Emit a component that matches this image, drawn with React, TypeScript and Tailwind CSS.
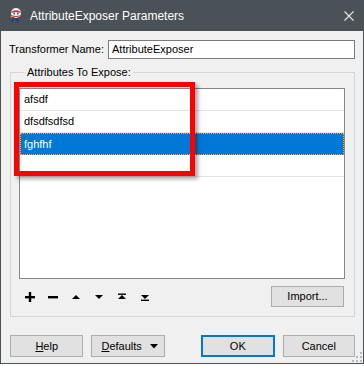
import React from 'react'

const rows = ['afsdf', 'dfsdfsdfsd', 'fghfhf', '']

function TitleIcon() {
  return (
    <svg width="16" height="17" viewBox="0 0 16 17" className="shrink-0">
      <path d="M5 9 L3 15 L5 15.5 L7 11 L9 15.5 L11 14 L9 9 Z" fill="#2a3f7a" />
      <circle cx="8" cy="6" r="5" fill="#f4f4f4" />
      <path d="M3.5 4.5 Q8 2 12.5 4.5 L12.5 6 Q8 3.8 3.5 6 Z" fill="#d8322c" />
      <path d="M4 8 Q8 10 12 8 L11.5 9.2 Q8 11 4.5 9.2 Z" fill="#d8322c" />
      <circle cx="6.2" cy="6.5" r="0.9" fill="#1c3d8c" />
      <circle cx="9.8" cy="6.5" r="0.9" fill="#1c3d8c" />
      <path d="M2 10 L4 9 L4.5 10.5 Z" fill="#f0c040" />
    </svg>
  )
}

function Grip() {
  const dots = [
    [8, 0],
    [4, 4],
    [8, 4],
    [0, 8],
    [4, 8],
    [8, 8],
  ]
  return (
    <svg width="10" height="10" viewBox="0 0 10 10">
      {dots.map(([x, y]) => (
        <rect key={`${x}-${y}`} x={x} y={y} width="2" height="2" fill="#b8b8b8" />
      ))}
    </svg>
  )
}

function ToolIcon({ kind }: { kind: 'plus' | 'minus' | 'up' | 'down' | 'top' | 'bottom' }) {
  return (
    <svg width="10" height="10" viewBox="0 0 10 10" className="shrink-0">
      {kind === 'plus' && (
        <>
          <rect x="0" y="4" width="10" height="2.4" fill="#000" />
          <rect x="3.8" y="0" width="2.4" height="10" fill="#000" />
        </>
      )}
      {kind === 'minus' && <rect x="0" y="4" width="10" height="2.4" fill="#000" />}
      {kind === 'up' && <path d="M1 7 L5 3 L9 7 Z" fill="#000" />}
      {kind === 'down' && <path d="M1 3 L9 3 L5 7 Z" fill="#000" />}
      {kind === 'top' && (
        <>
          <rect x="1" y="1.5" width="8" height="1.4" fill="#000" />
          <path d="M1 7 L5 3 L9 7 Z" fill="#000" />
        </>
      )}
      {kind === 'bottom' && (
        <>
          <path d="M1 3 L9 3 L5 7 Z" fill="#000" />
          <rect x="1" y="7.6" width="8" height="1.4" fill="#000" />
        </>
      )}
    </svg>
  )
}

export default function App() {
  return (
    <div
      className="w-[364px] h-[366px] bg-white text-[11px] text-black"
      style={{ fontFamily: '"Liberation Sans", Arial, sans-serif' }}
    >
      <div className="w-[364px] h-[364px] flex flex-col border-x border-b border-[#4a5258] bg-[#f0f0f0] relative">
        {/* title bar */}
        <div className="h-[31px] -mx-px bg-[#4a5258] flex items-center pl-[8px] pr-[10px] shrink-0">
          <TitleIcon />
          <span className="ml-[6px] text-[12px] text-white">AttributeExposer Parameters</span>
          <svg width="10" height="10" viewBox="0 0 10 10" className="ml-auto">
            <path d="M0.5 0.5 L9.5 9.5 M9.5 0.5 L0.5 9.5" stroke="#e8e8e8" strokeWidth="1.1" />
          </svg>
        </div>

        <div className="flex-1 flex flex-col px-[8px]">
          {/* name row */}
          <div className="flex items-center mt-[9px] h-[19px]">
            <span className="w-[99px]">Transformer Name:</span>
            <div className="flex-1 h-[19px] border border-[#7a7a7a] bg-white flex items-center px-[3px]">
              AttributeExposer
            </div>
          </div>

          {/* group box */}
          <fieldset className="mt-[6px] ml-[1px] border border-[#d5d5d5] pl-[8px] pr-[9px] pt-[9px] pb-[9px]">
            <legend className="ml-[6px] px-[2px] leading-[14px]">Attributes To Expose:</legend>
            <div className="h-[191px] border border-[#828790] bg-white flex flex-col">
              {rows.map((r, i) =>
                i === 2 ? (
                  <div
                    key={i}
                    className="h-[22px] bg-[#0078d7] text-white border border-dotted border-[#f3a34f] flex items-center px-[3px]"
                  >
                    {r}
                  </div>
                ) : (
                  <div key={i} className="h-[22px] border-b border-[#e6e6e6] flex items-center px-[4px]">
                    {r}
                  </div>
                ),
              )}
            </div>
            <div className="mt-[7px] h-[21px] flex items-center pl-[6px] pr-[1px]">
              <div className="flex items-center gap-[13px]">
                <ToolIcon kind="plus" />
                <ToolIcon kind="minus" />
                <ToolIcon kind="up" />
                <ToolIcon kind="down" />
                <ToolIcon kind="top" />
                <ToolIcon kind="bottom" />
              </div>
              <button className="ml-auto w-[73px] h-[21px] bg-[#e1e1e1] border border-[#adadad]">
                Import...
              </button>
            </div>
          </fieldset>

          {/* bottom buttons */}
          <div className="mt-[18px] flex items-center pl-[1px]">
            <button className="w-[74px] h-[22px] bg-[#e1e1e1] border border-[#adadad]">
              <span className="underline">H</span>elp
            </button>
            <button className="ml-[8px] w-[74px] h-[22px] bg-[#e1e1e1] border border-[#adadad] flex items-center pl-[9px] pr-[6px]">
              <span>
                <span className="underline">D</span>efaults
              </span>
              <svg width="8" height="5" viewBox="0 0 8 5" className="ml-auto">
                <path d="M0 0 L8 0 L4 4.5 Z" fill="#000" />
              </svg>
            </button>
            <button className="ml-[36px] w-[74px] h-[22px] bg-[#e1e1e1] border-2 border-[#0078d7]">OK</button>
            <button className="ml-[8px] w-[73px] h-[22px] bg-[#e1e1e1] border border-[#adadad]">Cancel</button>
          </div>
        </div>

        <div className="absolute right-[1px] bottom-[1px]">
          <Grip />
        </div>

        {/* red annotation */}
        <div className="absolute left-[13px] top-[82px] w-[181px] h-[94px] border-[5px] border-[#ff0000] shadow-[3px_3px_4px_rgba(0,0,0,0.35)] pointer-events-none" />
      </div>
    </div>
  )
}
